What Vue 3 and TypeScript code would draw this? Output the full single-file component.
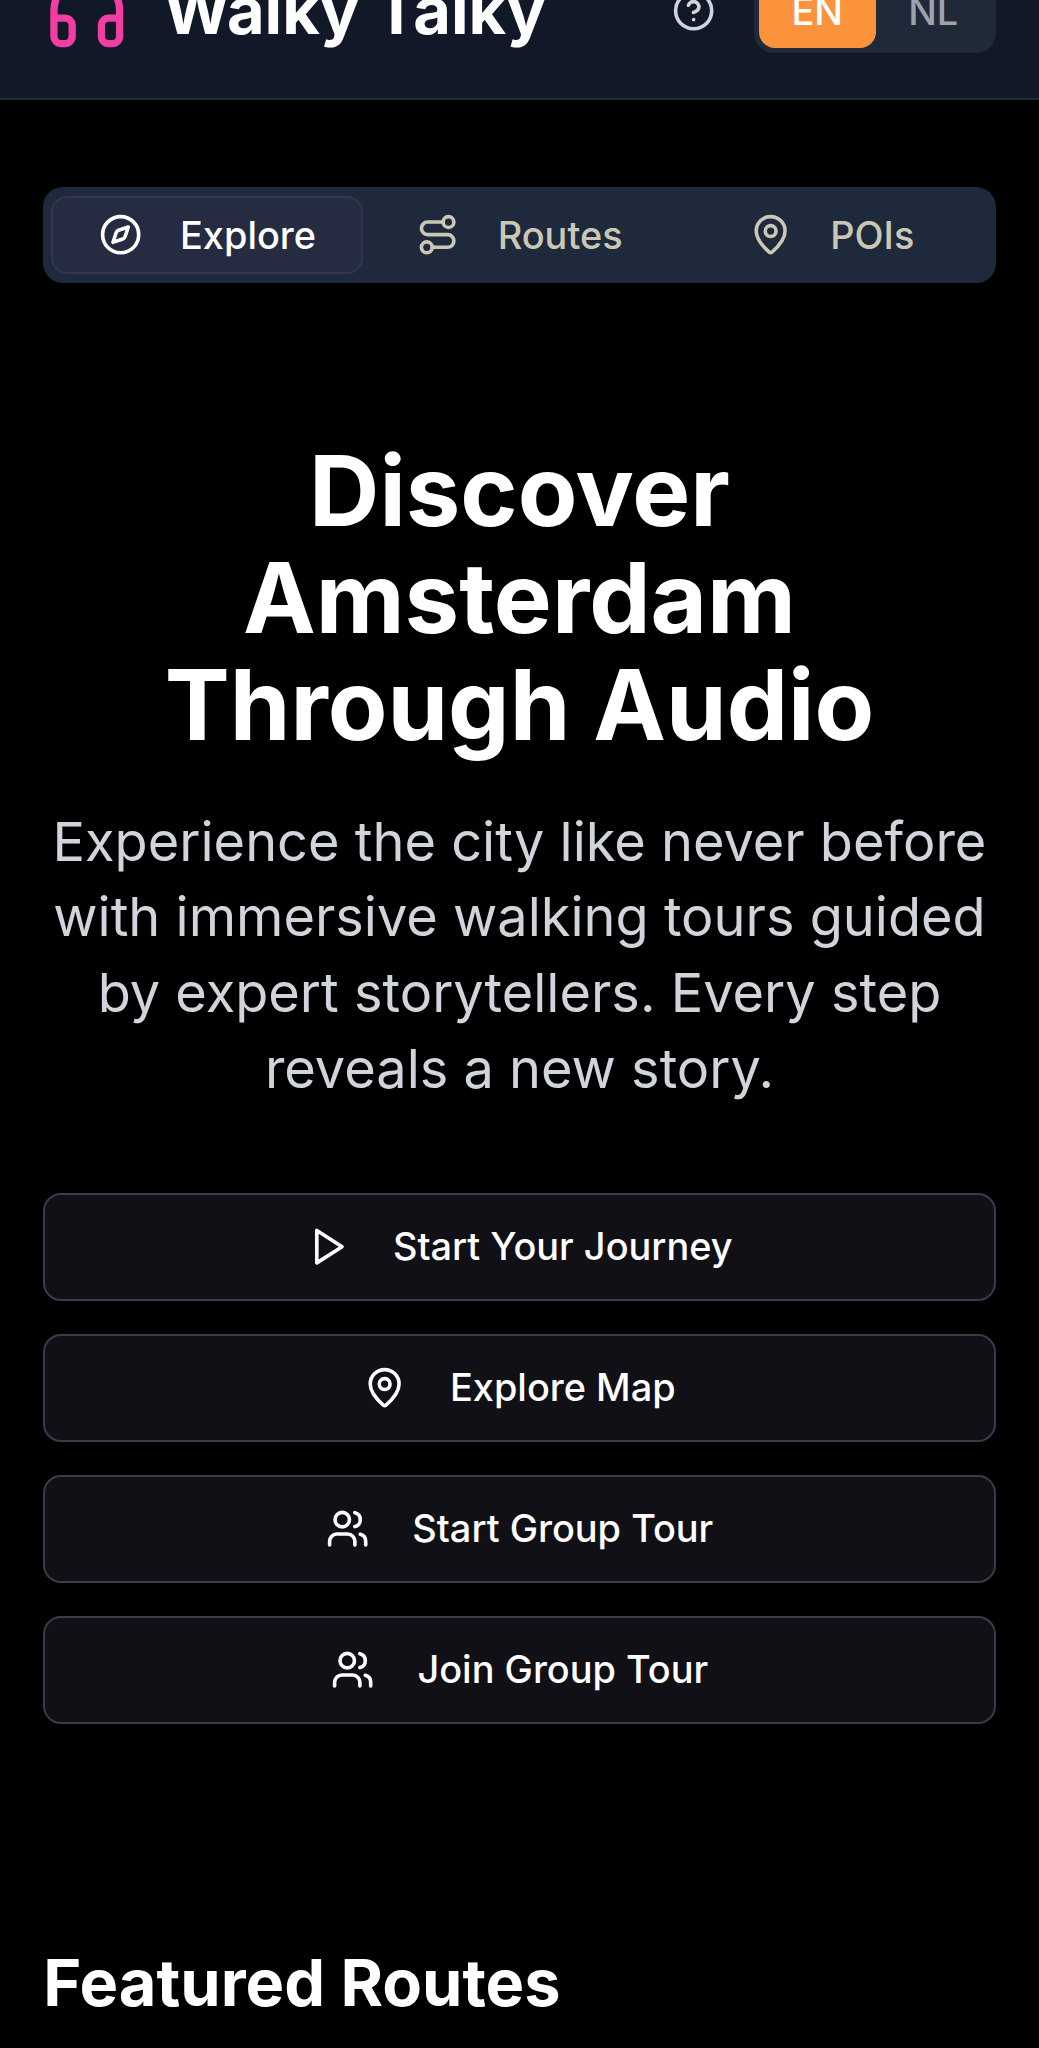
<script setup lang="ts">
const tabs = [
  { label: 'Explore', icon: 'compass', active: true },
  { label: 'Routes', icon: 'route', active: false },
  { label: 'POIs', icon: 'pin', active: false },
]
const actions = [
  { label: 'Start Your Journey', icon: 'play' },
  { label: 'Explore Map', icon: 'pin' },
  { label: 'Start Group Tour', icon: 'users' },
  { label: 'Join Group Tour', icon: 'users' },
]
</script>

<template>
  <div class="page">
    <header class="header">
      <div class="brand">
        <svg class="logo" viewBox="0 0 24 24" fill="none" stroke="currentColor" stroke-width="2" stroke-linecap="round" stroke-linejoin="round">
          <path d="M3 14h3a2 2 0 0 1 2 2v3a2 2 0 0 1-2 2H5a2 2 0 0 1-2-2v-7a9 9 0 0 1 18 0v7a2 2 0 0 1-2 2h-1a2 2 0 0 1-2-2v-3a2 2 0 0 1 2-2h3" />
        </svg>
        <span class="title">Walky Talky</span>
      </div>
      <div class="tools">
        <svg class="help" viewBox="0 0 24 24" fill="none" stroke="currentColor" stroke-width="2" stroke-linecap="round" stroke-linejoin="round">
          <circle cx="12" cy="12" r="10" />
          <path d="M9.09 9a3 3 0 0 1 5.83 1c0 2-3 3-3 3" />
          <path d="M12 17h.01" />
        </svg>
        <div class="lang">
          <span class="lang-btn on">EN</span>
          <span class="lang-btn">NL</span>
        </div>
      </div>
    </header>

    <main class="main">
      <nav class="tabs">
        <div v-for="t in tabs" :key="t.label" class="tab" :class="{ active: t.active }">
          <svg class="icon" viewBox="0 0 24 24" fill="none" stroke="currentColor" stroke-width="2" stroke-linecap="round" stroke-linejoin="round">
            <template v-if="t.icon === 'compass'">
              <circle cx="12" cy="12" r="10" />
              <path d="m16.24 7.76-1.804 5.411a2 2 0 0 1-1.265 1.265L7.76 16.24l1.804-5.411a2 2 0 0 1 1.265-1.265z" />
            </template>
            <template v-else-if="t.icon === 'route'">
              <circle cx="6" cy="19" r="3" />
              <path d="M9 19h8.5a3.5 3.5 0 0 0 0-7h-11a3.5 3.5 0 0 1 0-7H15" />
              <circle cx="18" cy="5" r="3" />
            </template>
            <template v-else>
              <path d="M20 10c0 4.993-5.539 10.193-7.399 11.799a1 1 0 0 1-1.202 0C9.539 20.193 4 14.993 4 10a8 8 0 0 1 16 0" />
              <circle cx="12" cy="10" r="3" />
            </template>
          </svg>
          <span>{{ t.label }}</span>
        </div>
      </nav>

      <section class="hero">
        <h1>Discover Amsterdam Through Audio</h1>
        <p>Experience the city like never before with immersive walking tours guided by expert storytellers. Every step reveals a new story.</p>
      </section>

      <div class="actions">
        <button v-for="a in actions" :key="a.label" class="action" type="button">
          <svg class="icon" viewBox="0 0 24 24" fill="none" stroke="currentColor" stroke-width="2" stroke-linecap="round" stroke-linejoin="round">
            <polygon v-if="a.icon === 'play'" points="6 3 20 12 6 21 6 3" />
            <template v-else-if="a.icon === 'pin'">
              <path d="M20 10c0 4.993-5.539 10.193-7.399 11.799a1 1 0 0 1-1.202 0C9.539 20.193 4 14.993 4 10a8 8 0 0 1 16 0" />
              <circle cx="12" cy="10" r="3" />
            </template>
            <template v-else>
              <path d="M16 21v-2a4 4 0 0 0-4-4H6a4 4 0 0 0-4 4v2" />
              <path d="M16 3.128a4 4 0 0 1 0 7.744" />
              <path d="M22 21v-2a4 4 0 0 0-3-3.87" />
              <circle cx="9" cy="7" r="4" />
            </template>
          </svg>
          <span>{{ a.label }}</span>
        </button>
      </div>

      <h2 class="featured">Featured Routes</h2>
    </main>
  </div>
</template>

<style>
html, body {
  background: #000;
  margin: 0;
  height: 2048px;
  overflow: hidden;
}
</style>

<style scoped>
.page {
  font-family: Inter, "Liberation Sans", sans-serif;
  color: #fff;
  background: #000;
  margin-top: -76.6px;
}
.header {
  display: flex;
  align-items: center;
  justify-content: space-between;
  padding: 43.3px;
  background: #111827;
  border-bottom: 2px solid #1f2937;
}
.brand {
  display: flex;
  align-items: center;
  gap: 33px;
}
.logo {
  width: 87.6px;
  height: 87.6px;
  color: #f23da3;
  flex: none;
  margin-left: -0.6px;
}
.title {
  font-size: 64.9px;
  font-weight: 700;
  line-height: 88px;
}
.tools {
  display: flex;
  align-items: center;
  gap: 38px;
}
.help {
  width: 43.3px;
  height: 43.3px;
  color: #d1d5db;
}
.lang {
  display: flex;
  padding: 5px;
  width: 242px;
  box-sizing: border-box;
  background: #1f2937;
  border-radius: 20px;
}
.lang-btn {
  flex: 1;
  height: 74px;
  display: flex;
  align-items: center;
  justify-content: center;
  border-radius: 16px;
  font-size: 37.9px;
  font-weight: 500;
  color: #9ca3af;
}
.lang-btn.on {
  flex: none;
  width: 117px;
  background: #fb923c;
  color: #fff;
}
.main {
  padding: 87px 43.3px 0;
}
.tabs {
  display: grid;
  grid-template-columns: repeat(3, 1fr);
  padding: 9px 8px;
  height: 96px;
  box-sizing: border-box;
  background: #1e293b;
  border-radius: 20px;
}
.tab {
  display: flex;
  align-items: center;
  justify-content: center;
  gap: 38px;
  border: 2px solid transparent;
  border-radius: 16px;
  font-size: 37.9px;
  font-weight: 500;
  color: #cbc7b7;
}
.tab.active {
  background: #252b40;
  border-color: #343650;
  color: #fff;
}
.icon {
  width: 43.3px;
  height: 43.3px;
  flex: none;
}
.hero {
  margin-top: 154px;
  text-align: center;
}
h1 {
  margin: 0;
  font-size: 97.4px;
  line-height: 107.2px;
  font-weight: 700;
}
.hero p {
  margin: 45px 0 0;
  font-size: 54.1px;
  line-height: 75.7px;
  color: #d1d5db;
}
.actions {
  display: flex;
  flex-direction: column;
  gap: 33px;
  margin-top: 86.6px;
}
.action {
  display: flex;
  align-items: center;
  justify-content: center;
  gap: 43.3px;
  height: 108px;
  padding: 0 0 1.5px;
  background: #101016;
  border: 2px solid #3a3a4a;
  border-radius: 18px;
  color: #fff;
  font-family: inherit;
  font-size: 37.9px;
  font-weight: 500;
}
.featured {
  margin: 220px 0 0;
  font-size: 64.9px;
  font-weight: 700;
  line-height: 1.2;
}
</style>
